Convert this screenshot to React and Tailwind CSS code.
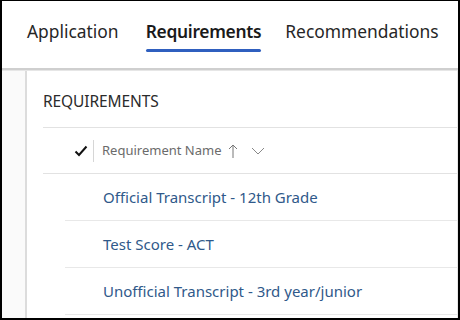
export default function App() {
  const rows = [
    "Official Transcript - 12th Grade",
    "Test Score - ACT",
    "Unofficial Transcript - 3rd year/junior",
  ];
  return (
    <div
      className="w-[460px] h-[320px] overflow-hidden bg-white border-t border-l-2 border-r-2 border-b-2 border-black flex flex-col"
      style={{ fontFamily: '"Noto Sans", "Open Sans", sans-serif' }}
    >
      <div className="h-[67px] flex items-start pl-[25px] pt-[18px] shrink-0">
        <div className="text-[17.4px] leading-[24px] text-[#262626]">Application</div>
        <div className="ml-[27px] flex flex-col items-stretch">
          <div className="text-[17.4px] leading-[24px] font-semibold tracking-[-0.3px] text-[#1a1a1a]">Requirements</div>
          <div className="mt-[6px] h-[3px] rounded-full bg-[#2f5fbf]" />
        </div>
        <div className="ml-[24px] text-[17.4px] leading-[24px] text-[#262626]">Recommendations</div>
      </div>
      <div className="h-[3px] bg-[#cfcfcf] shrink-0 border-b border-[#e6e6e6]" />
      <div className="flex-1 flex pl-[23px] bg-[#fafafa]">
        <div className="flex-1 bg-white border-l-2 border-[#dcdcdc] border-r border-r-[#e8e8e8] pl-[16px]">
          <div className="h-[57px] flex items-center border-b border-[#e2e2e2] pt-[6px]">
            <span className="text-[15.5px] text-[#2b2b2b] tracking-[-0.1px]">REQUIREMENTS</span>
          </div>
          <div className="h-[46px] flex items-center border-b border-[#e2e2e2]">
            <div className="w-[50px] flex justify-end pr-[5px]">
              <svg width="14" height="12" viewBox="0 0 14 12">
                <path d="M1.5 6.5 L5 10 L12.5 1.5" fill="none" stroke="#111" strokeWidth="2" />
              </svg>
            </div>
            <div className="w-px h-[22px] bg-[#d6d6d6]" />
            <span className="ml-[8px] text-[13px] text-[#6b6b6b]">Requirement Name</span>
            <svg className="ml-[6px]" width="10" height="16" viewBox="0 0 10 16">
              <path d="M5 15 V2 M1 6 L5 2 L9 6" fill="none" stroke="#777" strokeWidth="1" />
            </svg>
            <svg className="ml-[13px]" width="14" height="10" viewBox="0 0 14 10">
              <path d="M1 2 L7 8 L13 2" fill="none" stroke="#888" strokeWidth="1" />
            </svg>
          </div>
          {rows.map((r) => (
            <div key={r} className="ml-[22px] h-[47px] flex items-center border-b border-[#e8e8e8]">
              <span className="ml-[38px] text-[15px] text-[#30598a]">{r}</span>
            </div>
          ))}
        </div>
      </div>
    </div>
  );
}
